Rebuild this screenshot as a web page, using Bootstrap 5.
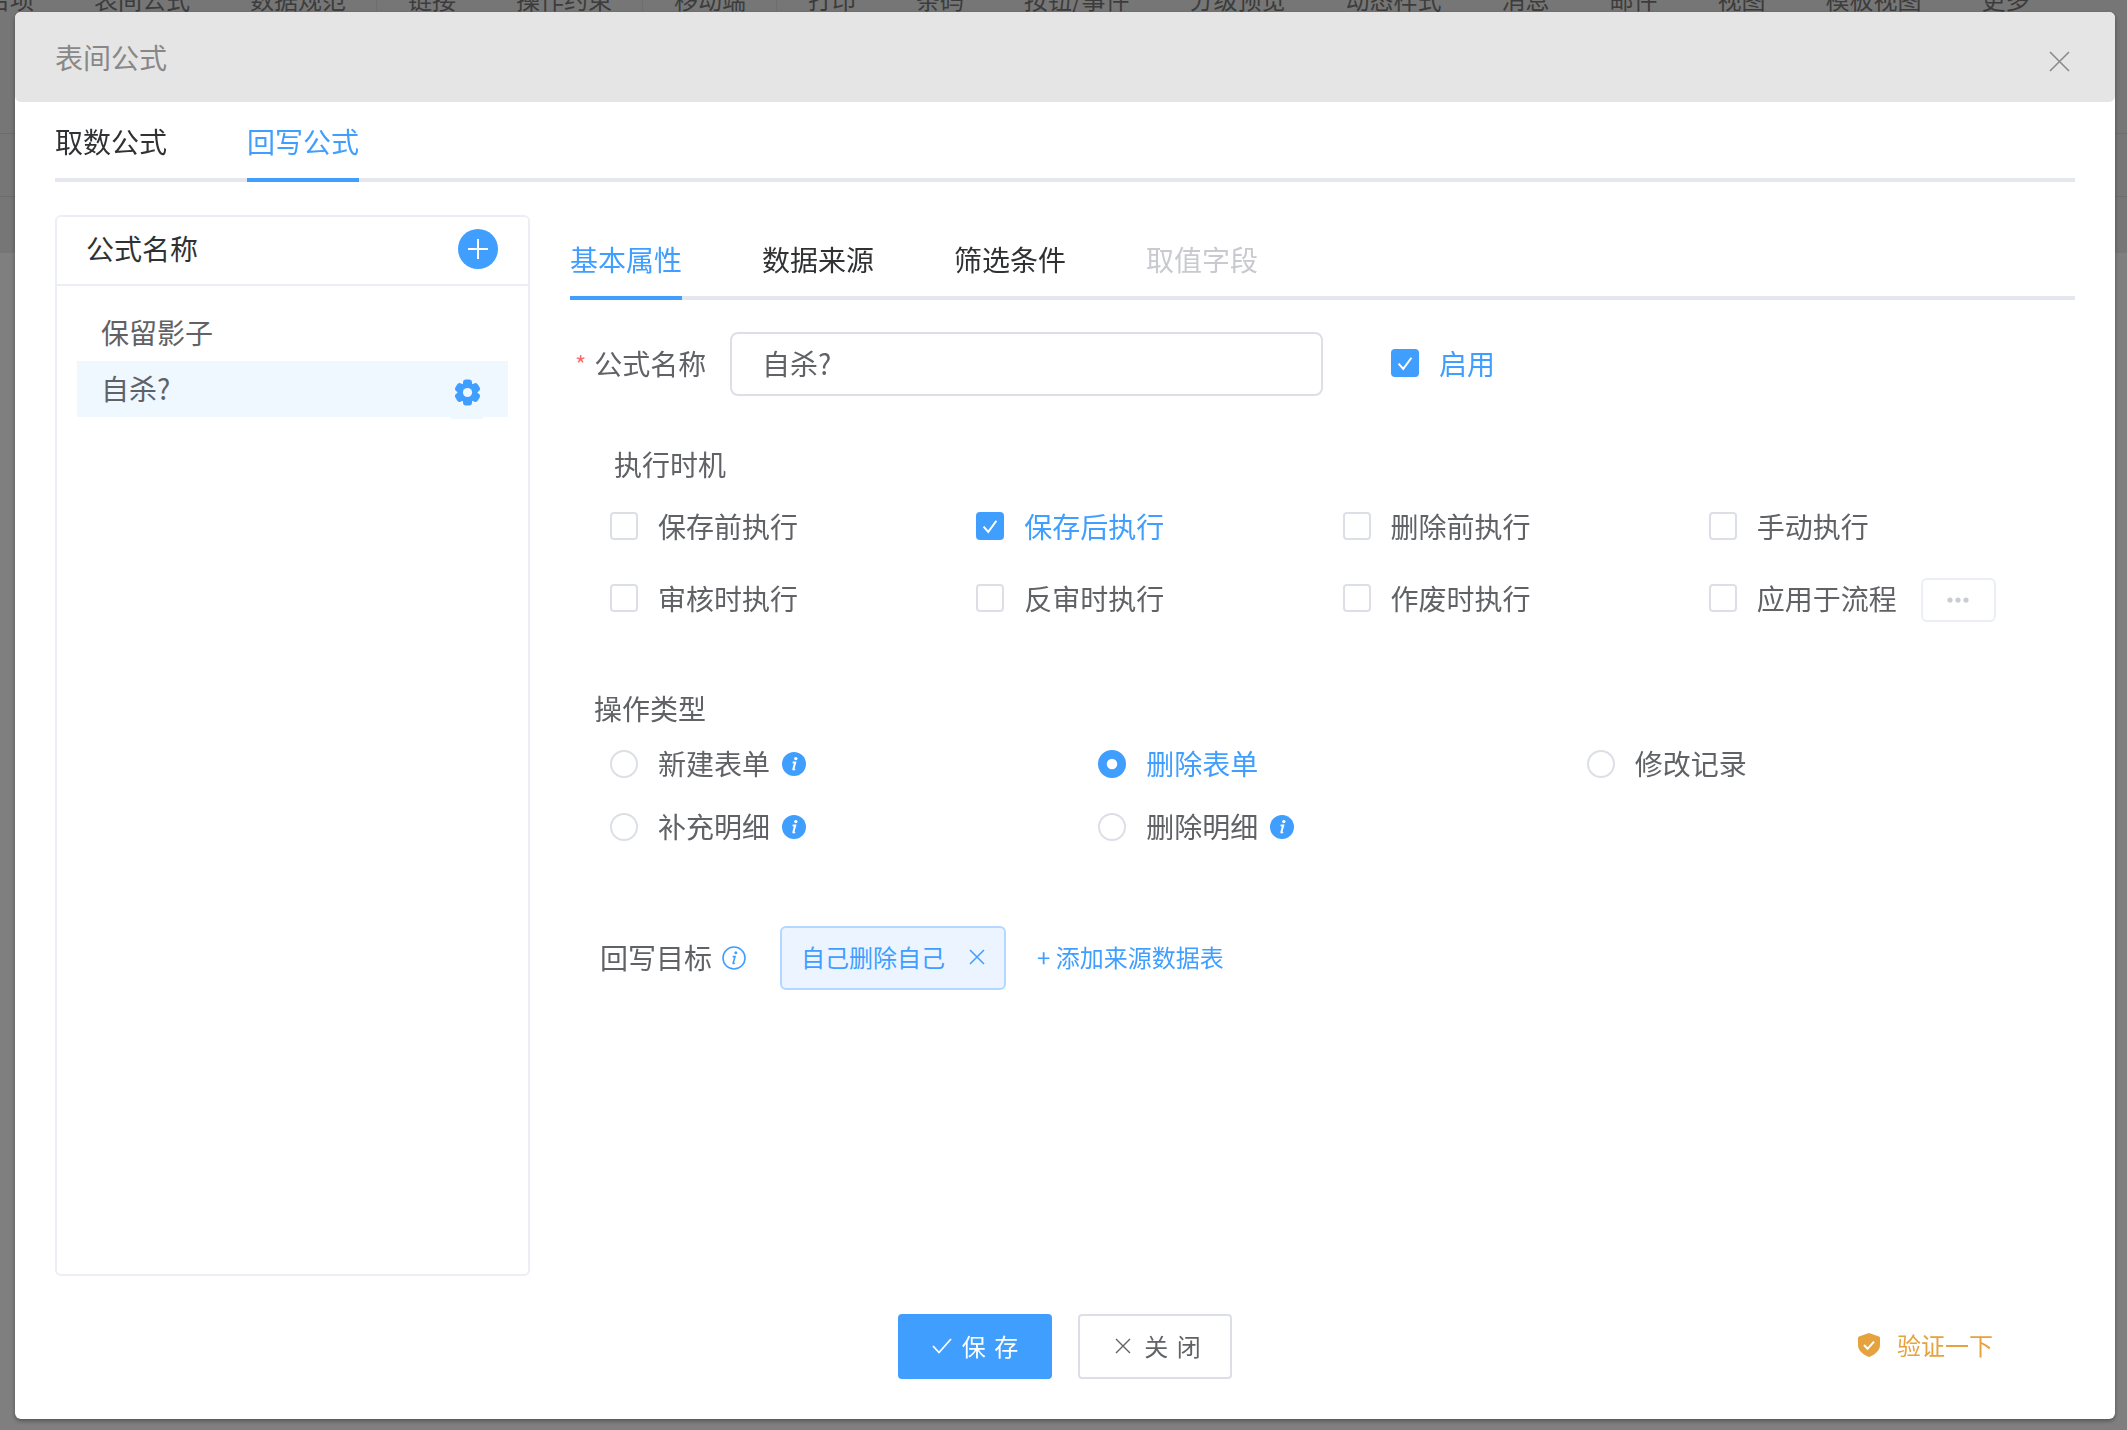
<!DOCTYPE html>
<html lang="zh-CN">

<head>
    <meta charset="UTF-8">
    <meta name="viewport" content="width=device-width, initial-scale=1.0">
    <title>表间公式</title>
    <link href="https://cdn.jsdelivr.net/npm/bootstrap@5.3.2/dist/css/bootstrap.min.css" rel="stylesheet">
    <style>
        body {
            background: #7f7f7f;
            font-family: "Noto Sans CJK SC", "Liberation Sans", sans-serif;
            font-size: 28px;
            color: #606266;
            overflow: hidden;
        }

        /* page behind the dialog */
        .under-top {
            height: 134px;
            background: #767676;
            border-bottom: 1px solid #6c6c6c;
            overflow: hidden;
        }

        .under-strip {
            margin: -13px 0 0 -44px;
            font-size: 24px;
            line-height: 24px;
            color: #3c3c3c;
            white-space: nowrap;
        }

        .under-strip span {
            padding: 0 30px;
        }

        .under-strip .sep {
            margin-right: 2px;
            box-shadow: 1px 0 0 #6e6e6e;
        }

        .under-mid {
            height: 63px;
            background: #767676;
            border-bottom: 1px solid #6c6c6c;
        }

        .under-low {
            height: 56px;
            background: #767676;
        }

        /* dialog */
        .modal-dialog.formula-dialog {
            max-width: none;
            width: 2100px;
            margin: 12px 0 0 15px;
        }

        .formula-dialog .modal-content {
            height: 1407px;
            border: 0;
            border-radius: 6px;
            box-shadow: 0 2px 4px rgba(0, 0, 0, .35);
        }

        .formula-dialog .modal-header {
            height: 90px;
            padding: 0 45px 0 40px;
            background: #e5e5e5;
            border: 0;
            border-radius: 6px;
        }

        .formula-dialog .modal-title {
            font-size: 28px;
            line-height: 40px;
            color: #888;
        }

        .formula-dialog .modal-body {
            padding: 0 40px;
            flex: none;
        }

        .close-x {
            margin-top: 8px;
            line-height: 0;
        }

        /* underlined tabs, both levels */
        .line-tabs {
            height: 80px;
            gap: 80px;
            border-bottom: 4px solid #e4e7ed;
            flex-wrap: nowrap;
        }

        .line-tabs .nav-link {
            height: 80px;
            margin-bottom: -4px;
            padding: 2px 0 0;
            display: flex;
            align-items: center;
            color: #303133;
            font-size: 28px;
            line-height: 40px;
            border-bottom: 4px solid transparent;
        }

        .line-tabs .nav-link.active {
            color: #409eff;
            border-bottom-color: #409eff;
        }

        .line-tabs .nav-link.disabled {
            color: #c8cacf;
        }

        /* formula list */
        .formula-card {
            width: 475px;
            height: 1061px;
            flex: none;
            border: 2px solid #ebeef5;
            border-radius: 6px;
        }

        .formula-card .card-header {
            height: 69px;
            padding: 0 30px 3px 29px;
            background: #fff;
            border-bottom: 2px solid #ebeef5;
            border-radius: 4px 4px 0 0;
            color: #303133;
            font-size: 28px;
            line-height: 40px;
        }

        .formula-card .card-header > span:first-child {
            padding-bottom: 2px;
        }

        .plus-btn {
            width: 40px;
            height: 40px;
            border-radius: 50%;
            background: #409eff;
        }

        .formula-list {
            padding: 19px 20px 0;
            border-radius: 0;
        }

        .formula-list .list-group-item {
            height: 56px;
            margin-bottom: 1px;
            padding: 0 0 0 24px;
            border: 0;
            border-radius: 0;
            color: #606266;
            font-size: 28px;
            line-height: 54px;
        }

        .formula-list .list-group-item.active {
            background: #eff7ff;
            color: #606266;
            line-height: 54px;
        }

        .gear-wrap {
            width: 32px;
            height: 56px;
            margin: 2px 25px -2px 0;
            padding-top: 2px;
            background: #eff7ff;
        }

        /* right side form */
        .form-side {
            width: 1505px;
            flex: none;
            margin: 5px 0 0 40px;
        }

        .name-row {
            height: 64px;
            margin-top: 32px;
        }

        .name-label {
            width: 160px;
            padding: 0 24px 2px 5px;
            margin: 0;
            white-space: nowrap;
        }

        .name-label i {
            margin-right: 8px;
            font-size: 24px;
            font-style: normal;
            color: #f56c6c;
            position: relative;
            top: -1px;
        }

        .name-input.form-control {
            width: 593px;
            height: 64px;
            padding: 0 20px 2px 30px;
            border: 2px solid #dcdfe6;
            border-radius: 8px;
            color: #606266;
            font-size: 28px;
        }

        .opt-check {
            display: flex;
            align-items: center;
            gap: 20px;
            min-height: 0;
            margin: 0;
            padding: 0;
        }

        .opt-check .form-check-input {
            flex: none;
            float: none;
            width: 28px;
            height: 28px;
            margin: 0;
            border: 2px solid #dcdfe6;
            border-radius: 4px;
            background-size: 28px 28px;
        }

        .opt-check .form-check-input[type=radio] {
            border-radius: 50%;
        }

        .opt-check .form-check-input:checked {
            background-color: #409eff;
            border-color: #409eff;
            background-image: url("data:image/svg+xml,%3Csvg xmlns='http://www.w3.org/2000/svg' viewBox='0 0 24 24'%3E%3Cpath d='M6.5 12.5l4 4.5 7-9.5' fill='none' stroke='white' stroke-width='1.7'/%3E%3C/svg%3E");
        }

        .opt-check .form-check-input[type=radio]:checked {
            background-image: url("data:image/svg+xml,%3Csvg xmlns='http://www.w3.org/2000/svg' viewBox='0 0 24 24'%3E%3Ccircle cx='12' cy='12' r='4.5' fill='white'/%3E%3C/svg%3E");
        }

        .opt-check .form-check-label {
            color: #606266;
            font-size: 28px;
            line-height: 40px;
            white-space: nowrap;
        }

        .opt-check .form-check-input:checked+.form-check-label {
            color: #409eff;
        }

        .enable-check {
            margin: -2px 0 0 68px;
        }

        .type-grid .form-check-label {
            padding-bottom: 2px;
        }

        .group-title {
            line-height: 40px;
        }

        .time-title {
            margin: 48px 0 20px 44px;
        }

        .time-grid {
            width: 1465px;
            margin-left: 40px;
        }

        .time-grid>div {
            height: 44px;
            display: flex;
            align-items: center;
        }

        .time-grid>div:nth-child(-n+4) {
            margin-bottom: 28px;
        }

        .flow-more {
            width: 75px;
            height: 44px;
            margin-left: 24px;
            padding: 0;
            border: 2px solid #ebeef5;
            border-radius: 6px;
            line-height: 0;
            position: relative;
            top: 2px;
        }

        .type-title {
            margin: 68px 0 16px 24px;
        }

        .type-grid {
            width: 1465px;
            margin-left: 40px;
        }

        .type-grid>div {
            height: 40px;
            display: flex;
            align-items: center;
            gap: 12px;
        }

        .type-grid>div:nth-child(-n+3) {
            margin-bottom: 23px;
        }

        .target-row {
            height: 63px;
            margin: 79px 0 0 30px;
        }

        .target-row > span:first-child {
            padding-bottom: 2px;
            margin-right: 10px;
        }

        .target-tag {
            height: 64px;
            margin-left: 34px;
            padding: 0 19px 2px 19px;
            background: #ecf5ff;
            border: 2px solid #b3d8ff;
            border-radius: 6px;
            color: #409eff;
            font-size: 24px;
            font-weight: 400;
            gap: 24px;
        }

        .add-source {
            margin-left: 31px;
            padding-bottom: 2px;
            color: #409eff;
            font-size: 24px;
            text-decoration: none;
        }

        /* footer */
        .formula-dialog .modal-footer {
            margin-top: 38px;
            padding: 0;
            border: 0;
            flex-wrap: nowrap;
            justify-content: center;
            align-items: stretch;
            height: 65px;
        }

        .footer-side {
            flex: 1 1 0;
        }

        .footer-btn.btn {
            width: 154px;
            height: 65px;
            margin: 0 13px;
            padding: 0 0 2px;
            font-size: 24px;
            word-spacing: 3px;
            border-radius: 4px;
            gap: 10px;
        }

        .save-btn.btn {
            background: #409eff;
            border: 2px solid #409eff;
            color: #fff;
        }

        .quit-btn.btn {
            padding-left: 6px;
            background: #fff;
            border: 2px solid #dcdfe6;
            color: #606266;
            gap: 13px;
        }

        .verify-link {
            padding: 0 118px 4px 0;
            color: #e6a23c;
            font-size: 24px;
            gap: 17px;
        }
    </style>
</head>

<body>
    <!-- page behind the dialog -->
    <div class="under-top">
        <div class="under-strip d-flex">
            <span>名项</span>
            <span>表间公式</span>
            <span class="sep">数据规范</span>
            <span>链接</span>
            <span class="sep">操作约束</span>
            <span class="sep">移动端</span>
            <span>打印</span>
            <span>条码</span>
            <span>按钮/事件</span>
            <span>分级预览</span>
            <span>动态样式</span>
            <span>消息</span>
            <span>邮件</span>
            <span>视图</span>
            <span>模板视图</span>
            <span>更多</span>
        </div>
    </div>
    <div class="under-mid"></div>
    <div class="under-low"></div>

    <!-- Dialog -->
    <div class="modal d-block">
        <div class="modal-dialog formula-dialog">
            <div class="modal-content">
                <div class="modal-header">
                    <h5 class="modal-title fw-normal">表间公式</h5>
                    <button type="button" class="btn p-0 border-0 close-x ms-auto" aria-label="关闭">
                        <svg width="21" height="21" viewBox="0 0 21 21">
                            <path d="M1 1l19 19M20 1L1 20" stroke="#8a8a8a" stroke-width="1.6" fill="none" />
                        </svg>
                    </button>
                </div>

                <div class="modal-body">
                    <ul class="nav line-tabs">
                        <li class="nav-item"><a class="nav-link" href="#">取数公式</a></li>
                        <li class="nav-item"><a class="nav-link active" href="#">回写公式</a></li>
                    </ul>

                    <div class="d-flex" style="margin-top: 33px">
                        <!-- formula list -->
                        <div class="card formula-card">
                            <div class="card-header d-flex align-items-center justify-content-between">
                                <span>公式名称</span>
                                <span class="plus-btn d-flex align-items-center justify-content-center">
                                    <svg width="20" height="20" viewBox="0 0 20 20">
                                        <path d="M10 0v20M0 10h20" stroke="#fff" stroke-width="2" />
                                    </svg>
                                </span>
                            </div>
                            <div class="list-group list-group-flush formula-list">
                                <div class="list-group-item">保留影子</div>
                                <div class="list-group-item active d-flex justify-content-between">
                                    <span>自杀?</span>
                                    <span class="gear-wrap d-flex align-items-center justify-content-center">
                                        <svg width="27" height="27" viewBox="0 0 27 27">
                                            <g fill="#409eff">
                                                <circle cx="13.5" cy="13.5" r="10" />
                                                <rect x="9" y="0.5" width="9" height="26" rx="3" />
                                                <rect x="9" y="0.5" width="9" height="26" rx="3" transform="rotate(60 13.5 13.5)" />
                                                <rect x="9" y="0.5" width="9" height="26" rx="3" transform="rotate(120 13.5 13.5)" />
                                            </g>
                                            <circle cx="13.5" cy="13.5" r="4.6" fill="#eff7ff" />
                                        </svg>
                                    </span>
                                </div>
                            </div>
                        </div>

                        <!-- formula form -->
                        <div class="form-side">
                            <ul class="nav line-tabs">
                                <li class="nav-item"><a class="nav-link active" href="#">基本属性</a></li>
                                <li class="nav-item"><a class="nav-link" href="#">数据来源</a></li>
                                <li class="nav-item"><a class="nav-link" href="#">筛选条件</a></li>
                                <li class="nav-item"><a class="nav-link disabled" href="#">取值字段</a></li>
                            </ul>

                            <div class="d-flex align-items-center name-row">
                                <label class="name-label text-end" for="formulaName"><i>*</i>公式名称</label>
                                <input id="formulaName" class="form-control name-input" type="text" value="自杀?">
                                <div class="form-check opt-check enable-check">
                                    <input class="form-check-input" type="checkbox" id="enableFlag" checked>
                                    <label class="form-check-label" for="enableFlag">启用</label>
                                </div>
                            </div>

                            <div class="group-title time-title">执行时机</div>
                            <div class="row g-0 time-grid" id="timeGrid"></div>

                            <div class="group-title type-title">操作类型</div>
                            <div class="row g-0 type-grid" id="typeGrid"></div>

                            <div class="d-flex align-items-center target-row">
                                <span>回写目标</span>
                                <svg width="24" height="24" viewBox="0 0 24 24">
                                    <circle cx="12" cy="12" r="11" fill="none" stroke="#409eff" stroke-width="1.6" />
                                    <circle cx="13.8" cy="6.8" r="1.5" fill="#409eff" />
                                    <path d="M10.6 10.6h2.4l-1.9 6.6c-.1.5.4.6 1.6-.4" fill="none" stroke="#409eff" stroke-width="1.6" />
                                </svg>
                                <span class="badge target-tag d-flex align-items-center">
                                    自己删除自己
                                    <svg width="16" height="16" viewBox="0 0 16 16">
                                        <path d="M1 1l14 14M15 1L1 15" stroke="#409eff" stroke-width="1.5" fill="none" />
                                    </svg>
                                </span>
                                <a class="add-source" href="#">+ 添加来源数据表</a>
                            </div>
                        </div>
                    </div>
                </div>

                <div class="modal-footer">
                    <div class="footer-side"></div>
                    <button type="button" class="btn footer-btn save-btn d-flex align-items-center justify-content-center">
                        <svg width="20" height="16" viewBox="0 0 20 16">
                            <path d="M1 8l6 6.5L19 1" stroke="#fff" stroke-width="1.8" fill="none" />
                        </svg>
                        保 存
                    </button>
                    <button type="button" class="btn footer-btn quit-btn d-flex align-items-center justify-content-center">
                        <svg width="16" height="16" viewBox="0 0 16 16">
                            <path d="M1 1l14 14M15 1L1 15" stroke="#606266" stroke-width="1.4" fill="none" />
                        </svg>
                        关 闭
                    </button>
                    <div class="footer-side d-flex align-items-center justify-content-end">
                        <span class="verify-link d-flex align-items-center">
                            <svg width="22" height="24" viewBox="0 0 22 24">
                                <path d="M11 0l10 3.6q1 .4 1 1.6V12c0 6-6 10-11 12C6 22 0 18 0 12V5.2q0-1.2 1-1.6z" fill="#e6a23c" />
                                <path d="M6 12l3.6 3.8L16 8.6" stroke="#fff" stroke-width="2" fill="none" />
                            </svg>
                            验证一下
                        </span>
                    </div>
                </div>
            </div>
        </div>
    </div>

    <script>
        const timeOptions = [
            ["保存前执行"], ["保存后执行", true], ["删除前执行"], ["手动执行"],
            ["审核时执行"], ["反审时执行"], ["作废时执行"], ["应用于流程", false, true]
        ];
        const typeOptions = [
            ["新建表单", false, true], ["删除表单", true], ["修改记录"],
            ["补充明细", false, true], ["删除明细", false, true]
        ];

        const moreBtn = `<button type="button" class="btn flow-more">
            <svg width="22" height="6" viewBox="0 0 22 6"><g fill="#c9ccd2"><circle cx="3" cy="3" r="2.6"/><circle cx="11" cy="3" r="2.6"/><circle cx="19" cy="3" r="2.6"/></g></svg>
        </button>`;
        const infoIcon = `<svg width="24" height="24" viewBox="0 0 24 24">
            <circle cx="12" cy="12" r="12" fill="#409eff"/>
            <circle cx="13.8" cy="6.6" r="1.7" fill="#fff"/>
            <path d="M10.6 10.6h2.6l-1.9 6.6c-.1.5.4.6 1.6-.4" fill="none" stroke="#fff" stroke-width="2"/>
        </svg>`;

        function optionHtml(kind, id, text, checked) {
            return `<div class="form-check opt-check">
                <input class="form-check-input" type="${kind}" id="${id}" name="${kind}Group" ${checked ? 'checked' : ''}>
                <label class="form-check-label" for="${id}">${text}</label>
            </div>`;
        }

        document.getElementById('timeGrid').innerHTML = timeOptions.map((o, i) =>
            `<div class="col-3">${optionHtml('checkbox', 'time' + i, o[0], o[1])}${o[2] ? moreBtn : ''}</div>`).join('');

        document.getElementById('typeGrid').innerHTML = typeOptions.map((o, i) =>
            `<div class="col-4">${optionHtml('radio', 'type' + i, o[0], o[1])}${o[2] ? infoIcon : ''}</div>`).join('');
    </script>

    <script src="https://cdn.jsdelivr.net/npm/bootstrap@5.3.2/dist/js/bootstrap.bundle.min.js"></script>
</body>

</html>
